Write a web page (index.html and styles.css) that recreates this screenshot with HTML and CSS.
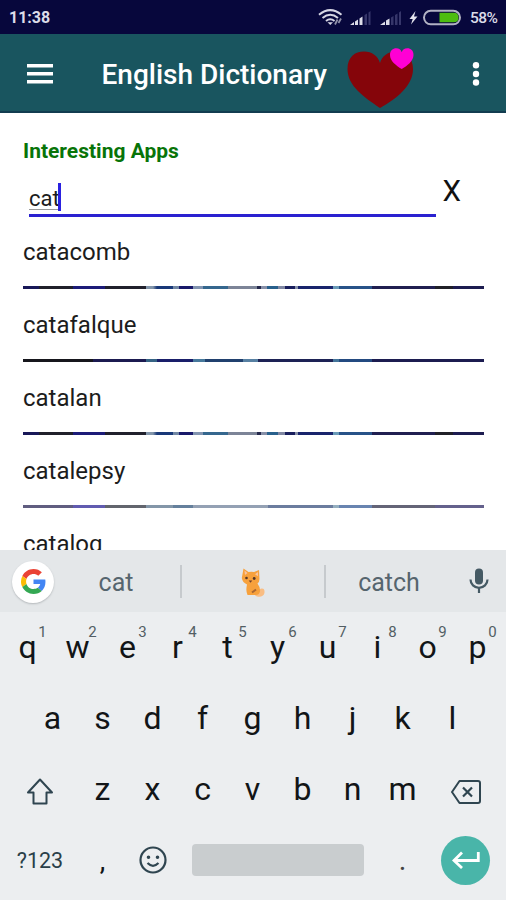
FILE: index.html
```html
<!DOCTYPE html>
<html lang="en">
<head>
<meta charset="utf-8">
<title>English Dictionary</title>
<link rel="stylesheet" href="styles.css">
</head>
<body>
<div class="screen">
  <header class="status">
    <span class="clock">11:38</span>
    <svg class="status-icons" width="148" height="34" viewBox="0 0 148 34">
      <g fill="none" stroke="#d6d6e4" stroke-width="2">
        <path d="M3 14.8Q14.200 5.500 25.500 14.800"/>
        <path d="M6.500 18Q14.200 11.600 22 18"/>
        <path d="M10 21Q14.200 17.600 18.500 21"/>
      </g>
      <path d="M11.500 22.200h5.500l-2.700 2.800z" fill="#d6d6e4"/>
      <path d="M19 24.500l2.500-5M22.500 23l2.500-4.500" stroke="#8f8fa8" stroke-width="1.800"/>
      <path d="M34 25l4-3v3zM39 21.500l3-2v5.500h-3zM43.500 18.500l3-2v8.500h-3z" fill="#dcdce8"/>
      <path d="M48.500 15l2.500-1.500v11.500h-2.500zM52.500 12.500l2-1.500v14h-2z" fill="#36366a"/>
      <path d="M64 25l5-3.500v3.500zM70 20.500l3.500-2v6.500h-3.500z" fill="#dcdce8"/>
      <path d="M75 17.500l2.500-1.500v9h-2.500zM79 15l2.500-1.500v11.500h-2.500zM83 12.500l2-1.500v14h-2z" fill="#36366a"/>
      <path d="M99.500 11l-6 8h3.200l-1.700 5.500 6.500-8h-3.500z" fill="#e4e4ee"/>
      <rect x="108" y="10.800" width="36" height="13.500" rx="6.700" fill="#07073c" stroke="#b2b2c4" stroke-width="2"/>
      <path d="M123.500 12.800h14.500q4.500 0 4.500 4.700t-4.500 4.700h-14.500z" fill="#4dbd10"/>
    </svg>
    <span class="percent">58%</span>
  </header>

  <nav class="appbar">
    <svg class="menu" width="28" height="20" viewBox="0 0 28 20" fill="#fff"><path d="M0 0h26v3.500H0zM0 8h26v3.500H0zM0 16h26v3.500H0z"/></svg>
    <h1 class="title">English Dictionary</h1>
    <svg class="hearts" width="68" height="62" viewBox="0 0 68 62">
      <path d="M33 60C17 49 0.500 38 0.500 21C0.500 9 8 3.500 17 3.500C25 3.500 31 8 33 15C35 8 41 3.500 49 3.500C59 3.500 66 10 66 21C66 38 49 51 33 60Z" fill="#85050a"/>
      <path d="M54.700 21C49 17.500 43 13 43 7C43 2.500 46 .3 49.200 .3C52 .3 54 1.800 54.700 4.200C55.500 1.800 57.500 .3 60.300 .3C63.800 .3 66.500 2.500 66.500 7C66.500 13 60 18 54.700 21Z" fill="#ff00d4"/>
    </svg>
    <svg class="more" width="8" height="24" viewBox="0 0 8 24" fill="#fff"><circle cx="4" cy="3.300" r="3.200"/><circle cx="4" cy="12" r="3.200"/><circle cx="4" cy="20.500" r="3.200"/></svg>
  </nav>

  <main class="content">
    <a class="promo">Interesting Apps</a>
    <div class="search">
      <div class="field"><span class="typed">cat</span><i class="caret"></i></div>
      <span class="clear">X</span>
    </div>
    <ul class="words">
      <li>catacomb</li>
      <li class="solid">catafalque</li>
      <li>catalan</li>
      <li class="faded">catalepsy</li>
      <li>catalog</li>
    </ul>
  </main>

  <section class="keyboard">
    <div class="suggestions">
      <span class="google"><svg width="25" height="25" viewBox="0 0 48 48">
        <path fill="#ea4335" d="M24 9.500c3.540 0 6.710 1.220 9.210 3.600l6.850-6.850C35.900 2.380 30.470 0 24 0 14.620 0 6.510 5.380 2.560 13.220l7.980 6.190C12.430 13.720 17.740 9.500 24 9.500z"/>
        <path fill="#4285f4" d="M46.980 24.550c0-1.570-.15-3.090-.38-4.550H24v9.020h12.940c-.58 2.960-2.260 5.480-4.780 7.180l7.730 6c4.510-4.180 7.090-10.360 7.090-17.650z"/>
        <path fill="#fbbc05" d="M10.530 28.590c-.48-1.450-.76-2.990-.76-4.590s.27-3.140.76-4.590l-7.980-6.190C.92 16.460 0 20.120 0 24s.92 7.540 2.560 10.780z"/>
        <path fill="#34a853" d="M24 48c6.480 0 11.930-2.130 15.890-5.810l-7.730-6c-2.150 1.450-4.920 2.300-8.160 2.300-6.260 0-11.570-4.220-13.470-9.910l-7.980 6.190C6.510 42.620 14.620 48 24 48z"/>
      </svg></span>
      <span class="suggest">cat</span>
      <span class="suggest middle"><svg width="26" height="31" viewBox="0 0 26 31">
        <path d="M17.500 27q5 1 4.500-3" fill="none" stroke="#f9bd83" stroke-width="5" stroke-linecap="round"/>
        <path d="M3.500 1.500l5 3.500q3-.5 5.500 0L19 3l.5 9q0 3-2 4.500 3 4 2.500 8-1 4-5 3.500H7.500q-2-4-.5-10.500Q2.500 15.500 1.800 11z" fill="#f7a13c"/>
        <path d="M4.500 3.500l3 2.500-2.500 2zM18 5l-3 2.200 3 2z" fill="#f9c4a0"/>
        <circle cx="6.500" cy="11" r="1.300" fill="#553728"/><circle cx="14.200" cy="11.500" r="1.400" fill="#553728"/>
        <path d="M8.700 13.500h3.600l-1.800 2.300z" fill="#70402c"/><path d="M12 25.500l4-3" stroke="#a96732" stroke-width="2"/>
      </svg></span>
      <span class="suggest">catch</span>
      <svg class="mic" width="20" height="26" viewBox="0 0 20 26"><rect x="6" y="0.500" width="8" height="16" rx="4" fill="#455a64"/><path d="M1.500 11.500a8.500 8.300 0 0 0 17 0M10 20v5" fill="none" stroke="#455a64" stroke-width="2.200"/></svg>
    </div>
    <div class="row">
      <span class="key">q<sup>1</sup></span><span class="key">w<sup>2</sup></span><span class="key">e<sup>3</sup></span><span class="key">r<sup>4</sup></span><span class="key">t<sup>5</sup></span><span class="key">y<sup>6</sup></span><span class="key">u<sup>7</sup></span><span class="key">i<sup>8</sup></span><span class="key">o<sup>9</sup></span><span class="key">p<sup>0</sup></span>
    </div>
    <div class="row">
      <span class="key">a</span><span class="key">s</span><span class="key">d</span><span class="key">f</span><span class="key">g</span><span class="key">h</span><span class="key">j</span><span class="key">k</span><span class="key">l</span>
    </div>
    <div class="row">
      <span class="key wide"><svg class="shift" width="28" height="28" viewBox="0 0 28 28" fill="none" stroke="#2f4550" stroke-width="2"><path d="M14 1.500L2 14.500H7.500v11h13v-11H26z" stroke-linejoin="round"/></svg></span><span class="key">z</span><span class="key">x</span><span class="key">c</span><span class="key">v</span><span class="key">b</span><span class="key">n</span><span class="key">m</span><span class="key wide"><svg class="erase" width="30" height="24" viewBox="0 0 30 24" fill="none" stroke="#2f4550" stroke-width="2"><path d="M8.500 1h18.500q2 0 2 2v18q0 2-2 2H8.500L1 12z" stroke-linejoin="round"/><path d="M12 7.500l9 9M21 7.500l-9 9" stroke-width="2.200"/></svg></span>
    </div>
    <div class="row">
      <span class="key wide symbols">?123</span><span class="key comma">,</span><span class="key"><svg class="smiley" width="28" height="28" viewBox="0 0 28 28" fill="none" stroke="#2f4550" stroke-width="2.200"><circle cx="14" cy="14" r="12.500"/><path d="M8.500 17q5.500 5.500 11 0"/><circle cx="9.500" cy="11.300" r="1" fill="#2f4550" stroke-width="1.600"/><circle cx="18.500" cy="11.300" r="1" fill="#2f4550" stroke-width="1.600"/></svg></span><span class="key space"><i></i></span><span class="key dot">.</span><span class="key wide"><span class="enter"><svg width="28" height="18" viewBox="0 0 28 18" fill="none" stroke="#fff" stroke-width="2.800"><path d="M26.300 1v8.500H2.500M10 1.500L2 9.500l8 7.500"/></svg></span></span>
    </div>
  </section>
</div>
</body>
</html>
```
FILE: styles.css
```css
* { box-sizing: border-box; }
body { margin: 0; background: #fff; font-family: Roboto, "Liberation Sans", sans-serif; }
.screen { width: 506px; height: 900px; display: flex; flex-direction: column; overflow: hidden; }

.status { height: 34px; flex: none; display: flex; align-items: center; padding: 2px 8px 0 9px; background: #07073c; color: #dcdce8; font-size: 16px; font-weight: 700; }
.clock { margin-top: -1px; }
.status-icons { margin: -2px 0 0 auto; }
.percent { width: 28px; margin: -1px 0 0 6px; font-size: 15.5px; font-weight: 500; letter-spacing: -0.6px; }

.appbar { height: 79px; flex: none; display: flex; align-items: center; padding: 1px 26px 0 27px; background: #19555f; border-bottom: 2px solid #123c50; }
.menu { margin-top: 2px; }
.title { margin: 4px 0 0 46.5px; width: 246px; font-size: 28px; line-height: 34px; font-weight: 500; color: #fff; white-space: nowrap; }
.hearts { margin: 11px 0 0 -0.5px; }
.more { margin: 1px 0 0 auto; }

.content { height: 437px; flex: none; padding: 0 22px 0 23px; overflow: hidden; }
.promo { display: block; height: 64px; padding-top: 25px; font-size: 21px; line-height: 26px; font-weight: 700; color: #087408; }
.search { height: 39px; display: flex; }
.field { position: relative; width: 407px; height: 40px; margin-left: 6px; border-bottom: 3px solid #2a21d0; }
.typed { display: inline-block; margin-top: 8px; height: 25px; font-size: 22px; line-height: 27px; color: #1c1c1c; border-bottom: 1px solid #999; }
.caret { position: absolute; left: 29px; top: 6px; width: 3px; height: 28px; background: #2a21e0; }
.clear { margin-left: 6.5px; font-size: 29.5px; line-height: 28px; color: #111; }
.words { margin: 0; padding: 0; list-style: none; }
.words li { height: 73px; font-size: 24px; line-height: 72px; color: #1c1c1c; background: linear-gradient(90deg, #191858 0 16px, #20202a 16px 50px, #1c1b78 50px 82px, #20202c 82px 123px, #8295aa 123px 130px, #183878 134px 150px, #7187a4 150px 156px, #18196a 156px 170px, #8294b0 170px 180px, #35678e 180px 205px, #7c8497 205px 234px, #24284b 234px 238px, #8790a8 238px 244px, #28608c 244px 255px, #8087a2 255px 262px, #181e5c 262px 272px, #8790a8 272px 275px, #18246c 275px 310px, #6a9bb8 310px 316px, #285288 316px 349px, #201f50 349px 412px, #202028 412px 430px, #1d1c50 430px) bottom / 100% 3px no-repeat; }
.words .solid { background-image: linear-gradient(90deg, #16161c 0 70px, #1b1a50 70px 123px, #356384 123px 134px, #191e6a 134px 170px, #47799c 170px 182px, #20406e 182px 220px, #5780a2 220px 235px, #1d2255 235px 310px, #44759a 310px 316px, #234a80 316px 349px, #1c1c50 349px); }
.words .faded { background-image: linear-gradient(90deg, #605d80 0 50px, #615bb0 50px 82px, #62656d 82px 123px, #8396a8 123px 150px, #65809c 150px 170px, #94a1b4 170px 245px, #6b7c9e 245px 310px, #95afc0 310px 316px, #6884b0 316px 349px, #646477 349px 412px, #64618c 412px); }

.keyboard { position: relative; height: 350px; flex: none; background: #eceef0; }
.suggestions { height: 62px; padding-left: 12px; display: flex; align-items: center; background: #e4e7e9; }
.google { width: 42px; height: 42px; margin-top: 1px; border-radius: 50%; display: grid; place-items: center; background: #fff; box-shadow: 0 1px 2px #b5b9bc; }
.suggest { width: 126px; height: 33px; display: grid; place-items: center; padding: 2px 0 0; font-size: 25px; line-height: 31px; color: #56656e; }
.suggest:nth-child(2) { padding-right: 2px; }
.middle { width: 146px; padding: 2px 1px 0 0; border: solid #c6cacd; border-width: 0 2px; }
.mic { margin-left: 17px; }
.row { height: 71px; display: flex; justify-content: center; padding-right: 1px; }
.key { position: relative; width: 50px; display: flex; align-items: center; justify-content: center; font-size: 32px; line-height: 71px; color: #121517; }
.key sup { position: absolute; left: 34px; top: 12px; width: 12px; text-align: center; font-size: 15px; line-height: 16px; color: #535e64; }
.wide { width: 75px; }
.shift { margin-top: 4px; }
.erase { margin: 4px 0 0 1px; }
.smiley { margin-top: -2px; }
.symbols { font-size: 21.5px; color: #2a3f49; }
.comma { font-size: 28px; }
.space { width: 200px; }
.space i { width: 172px; height: 32px; margin-top: -1px; border-radius: 4px; background: #c9cdcf; }
.dot { color: #444; font-size: 29px; }
.enter { width: 49px; height: 49px; margin: -1px 0 0 1px; border-radius: 50%; display: grid; place-items: center; background: #49b5a9; }
```
